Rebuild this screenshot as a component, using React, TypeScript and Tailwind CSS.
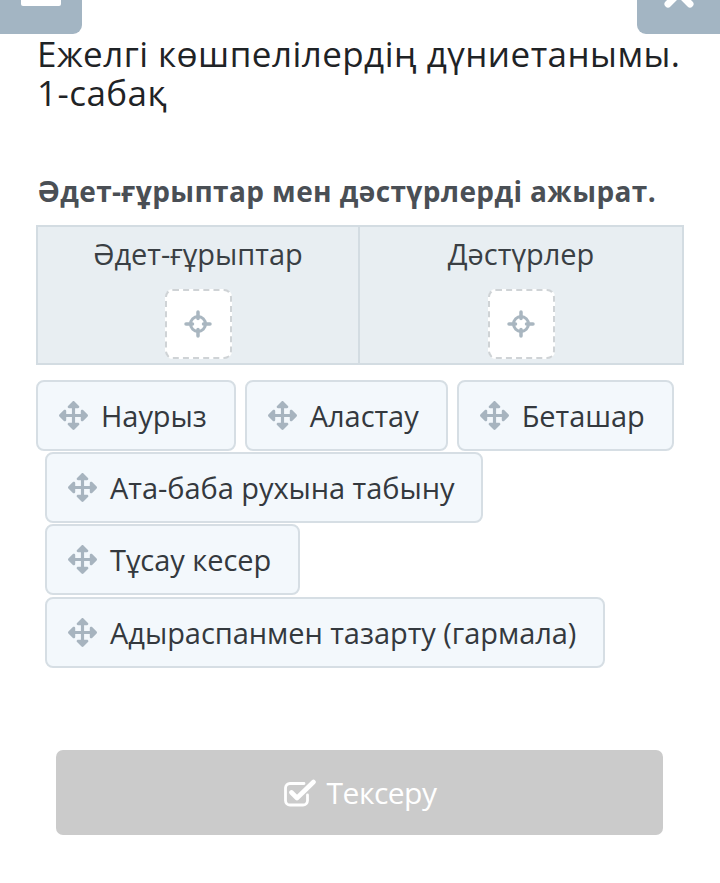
import React from "react";
import { FaArrowsAlt } from "react-icons/fa";

const font = { fontFamily: '"Open Sans", "Noto Sans", sans-serif' };

function Crosshair() {
  return (
    <svg width="28" height="28" viewBox="0 0 28 28" fill="none">
      <circle cx="14" cy="14" r="7.5" stroke="#a9b6c0" strokeWidth="3" />
      <line x1="14" y1="2" x2="14" y2="8.5" stroke="#a9b6c0" strokeWidth="3.5" strokeLinecap="round" />
      <line x1="14" y1="19.5" x2="14" y2="26" stroke="#a9b6c0" strokeWidth="3.5" strokeLinecap="round" />
      <line x1="2" y1="14" x2="8.5" y2="14" stroke="#a9b6c0" strokeWidth="3.5" strokeLinecap="round" />
      <line x1="19.5" y1="14" x2="26" y2="14" stroke="#a9b6c0" strokeWidth="3.5" strokeLinecap="round" />
    </svg>
  );
}

function CheckSquare() {
  return (
    <svg width="34" height="28" viewBox="0 0 34 28" fill="none">
      <path
        d="M21 4.5H7a4.5 4.5 0 0 0-4.5 4.5v12.5A4.5 4.5 0 0 0 7 26h13a4.5 4.5 0 0 0 4.5-4.5V16"
        stroke="white"
        strokeWidth="2.8"
        strokeLinecap="round"
      />
      <path
        d="M8.5 13.5l5.5 5.5L30.5 3"
        stroke="white"
        strokeWidth="4.6"
        strokeLinecap="round"
        strokeLinejoin="round"
      />
    </svg>
  );
}

function Chip({ label, className = "" }: { label: string; className?: string }) {
  return (
    <div
      className={
        "flex h-[71px] items-center rounded-[8px] border-2 border-[#d6dee4] bg-[#f3f8fc] pl-[21px] pr-[27px] " +
        className
      }
    >
      <FaArrowsAlt className="mr-[13px] text-[#a7b4bf]" size={29} />
      <span className="text-[29px] leading-none text-[#34393e] tracking-[-0.05px]">{label}</span>
    </div>
  );
}

export default function App() {
  return (
    <div className="relative h-[883px] w-[720px] overflow-hidden bg-white" style={font}>
      <div className="flex h-[34px] justify-between">
        <div className="flex h-[34px] w-[82px] justify-center overflow-hidden rounded-br-[9px] bg-[#a3b5c3]">
          <div className="mt-[-2px] h-[8px] w-[40px] rounded-[2px] bg-white" />
        </div>
        <div className="flex h-[34px] w-[83px] justify-center overflow-hidden rounded-bl-[9px] bg-[#a3b5c3]">
          <svg width="34" height="34" viewBox="0 0 34 34" className="mt-[-24px]">
            <path d="M6 6L28 28M28 6L6 28" stroke="white" strokeWidth="7" strokeLinecap="round" />
          </svg>
        </div>
      </div>

      <h1 className="mt-[0px] px-[37px] text-[35px] font-normal leading-[39px] tracking-[0.45px] text-[#1f2326]">
        Ежелгі көшпелілердің дүниетанымы.
        <br />
        1-сабақ
      </h1>

      <p className="mt-[62px] px-[37px] text-[28px] font-bold leading-[34px] tracking-[0.4px] text-[#4a4f55]">
        Әдет-ғұрыптар мен дәстүрлерді ажырат.
      </p>

      <div className="mx-[36px] mt-[17px] grid h-[140px] grid-cols-2 border-2 border-[#d3dce2] bg-[#e8eef2]">
        {["Әдет-ғұрыптар", "Дәстүрлер"].map((t, i) => (
          <div
            key={t}
            className={
              "flex flex-col items-center pt-[10px] " + (i === 0 ? "border-r-2 border-[#d3dce2]" : "")
            }
          >
            <div className="text-[29px] leading-[34px] tracking-[0px] text-[#3a3f44]">{t}</div>
            <div className="mt-[18px] flex h-[70px] w-[67px] items-center justify-center rounded-[8px] border-2 border-dashed border-[#cfd3d6] bg-white">
              <Crosshair />
            </div>
          </div>
        ))}
      </div>

      <div className="mt-[15px] flex flex-col gap-[1px]">
        <div className="flex gap-[9px] pl-[36px]">
          <Chip label="Наурыз" />
          <Chip label="Аластау" />
          <Chip label="Беташар" />
        </div>
        <div className="flex pl-[45px]">
          <Chip label="Ата-баба рухына табыну" />
        </div>
        <div className="flex pl-[45px]">
          <Chip label="Тұсау кесер" />
        </div>
        <div className="mt-[1px] flex pl-[45px]">
          <Chip label="Адыраспанмен тазарту (гармала)" />
        </div>
      </div>

      <div className="mx-[56px] mt-[82px] flex h-[85px] w-[607px] items-center justify-center gap-[10px] rounded-[7px] bg-[#cbcbcb]">
        <CheckSquare />
        <span className="text-[30px] leading-none tracking-[-0.5px] text-white">Тексеру</span>
      </div>
    </div>
  );
}
